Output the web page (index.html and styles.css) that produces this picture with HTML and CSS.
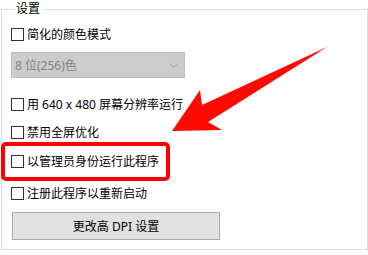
FILE: index.html
```html
<!DOCTYPE html>
<html lang="zh-CN">
<head>
<meta charset="UTF-8">
<title>设置</title>
<link rel="stylesheet" href="styles.css">
</head>
<body>

<div class="page">
    <fieldset class="group">
        <legend>设置</legend>

        <div class="option first">
            <span class="check"></span>
            <span class="label">简化的颜色模式</span>
        </div>

        <div class="select">
            <span class="select-text">8 位(256)色</span>
            <svg class="chevron" width="9" height="5" viewBox="0 0 9 5">
                <polyline points="0.5,0.5 4.5,4.5 8.5,0.5" fill="none" stroke="#a8a8a8" stroke-width="1"/>
            </svg>
        </div>

        <div class="option opt-640">
            <span class="check"></span>
            <span class="label">用 640 x 480 屏幕分辨率运行</span>
        </div>

        <div class="option opt-full">
            <span class="check"></span>
            <span class="label">禁用全屏优化</span>
        </div>

        <div class="option opt-admin">
            <span class="check"></span>
            <span class="label">以管理员身份运行此程序</span>
        </div>

        <div class="option opt-restart">
            <span class="check"></span>
            <span class="label">注册此程序以重新启动</span>
        </div>

        <button class="dpi-btn">更改高 DPI 设置</button>
    </fieldset>

    <!-- annotation: highlight + arrow -->
    <div class="highlight"></div>
    <svg class="arrow" width="368" height="255" viewBox="0 0 368 255">
        <polygon points="172,131 200,90 202,105 327,47 208,122 222,130" fill="#ff0a00"/>
    </svg>
</div>

</body>
</html>
```

FILE: styles.css
```css
/* Basic Styles */
body {
    margin: 0;
    padding: 0;
    background-color: #fff;
    font-family: "Noto Sans", "Noto Sans CJK SC", sans-serif;
    font-size: 12px;
    color: #000;
}
.page {
    position: relative;
    width: 368px;
    height: 255px;
    overflow: hidden;
}
/* Group box */
.group {
    margin: 1px 0 0 1px;
    padding: 0 0 0 9px;
    box-sizing: border-box;
    width: 367px;
    height: 249px;
    border: 1px solid #dcdcdc;
}
.group legend {
    margin-left: 4px;
    padding: 0 3px 0 1px;
    line-height: 16px;
    font-size: 12px;
}
/* Checkbox rows */
.option {
    display: flex;
    align-items: center;
    height: 13px;
}
.check {
    width: 11px;
    height: 11px;
    border: 1px solid #333;
    background-color: #fff;
    flex-shrink: 0;
}
.label {
    margin-left: 3px;
    line-height: 13px;
    white-space: nowrap;
}
.first {
    margin-top: 11px;
}
.opt-640 {
    margin-top: 20px;
}
.opt-full {
    margin-top: 15px;
}
.opt-admin {
    margin-top: 16px;
}
.opt-restart {
    margin-top: 19px;
}
/* Disabled dropdown */
.select {
    display: flex;
    align-items: center;
    justify-content: space-between;
    margin-top: 11px;
    padding: 0 6px 0 3px;
    box-sizing: border-box;
    width: 174px;
    height: 26px;
    border: 1px solid #bfbfbf;
    background-color: #cccccc;
    color: #838383;
}
.chevron {
    display: block;
}
/* Button */
.dpi-btn {
    display: block;
    margin-top: 12px;
    margin-left: 1px;
    width: 208px;
    height: 28px;
    border: 1px solid #adadad;
    background-color: #e1e1e1;
    font-family: "Noto Sans", "Noto Sans CJK SC", sans-serif;
    font-size: 12px;
    color: #000;
    padding: 0;
}
/* Annotation overlay */
.highlight {
    position: absolute;
    left: 1px;
    top: 142px;
    width: 161px;
    height: 31px;
    border: 4px solid #ff0000;
    border-radius: 5px;
}
.arrow {
    position: absolute;
    left: 0;
    top: 0;
    pointer-events: none;
}
```
